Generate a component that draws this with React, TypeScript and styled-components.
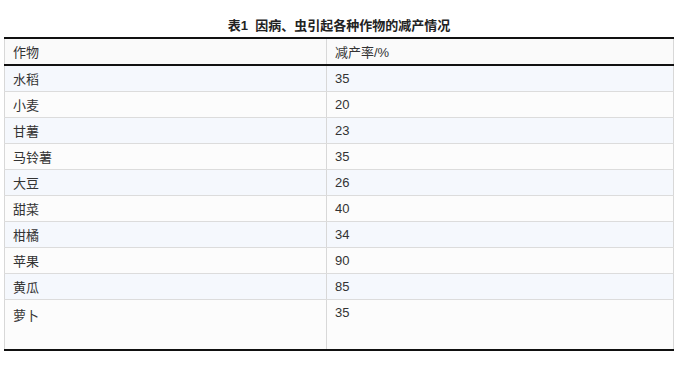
import styled, { createGlobalStyle } from 'styled-components';

const rows: [string, string][] = [
  ['水稻', '35'],
  ['小麦', '20'],
  ['甘薯', '23'],
  ['马铃薯', '35'],
  ['大豆', '26'],
  ['甜菜', '40'],
  ['柑橘', '34'],
  ['苹果', '90'],
  ['黄瓜', '85'],
  ['萝卜', '35'],
];

const GlobalStyle = createGlobalStyle`
  body {
    margin: 0;
    background: #ffffff;
    font-family: "Liberation Sans", "Noto Sans CJK SC", sans-serif;
    color: #333;
  }
`;

const Page = styled.div`
  width: 680px;
  height: 382px;
  padding: 18px 0 0 4px;
  box-sizing: border-box;
`;

const Caption = styled.div`
  width: 670px;
  text-align: center;
  font-size: 13px;
  font-weight: bold;
  color: #222;
  height: 19px;
  line-height: 16px;
  white-space: pre;
`;

const Table = styled.table`
  width: 670px;
  border-collapse: collapse;
  font-size: 13px;
  border-top: 2px solid #111;
  border-bottom: 2px solid #111;
`;

const HeadCell = styled.th`
  text-align: left;
  font-weight: normal;
  height: 25px;
  padding: 0 8px;
  background: #fafafa;
  border-left: 1px solid #d8d8d8;
  border-right: 1px solid #d8d8d8;
  border-bottom: 2px solid #111;
  color: #333;
  &:first-child {
    width: 305px;
  }
`;

const Row = styled.tr<{ $tint: boolean }>`
  background: ${p => (p.$tint ? '#f5f8fd' : '#fcfcfc')};
`;

const Cell = styled.td<{ $tall?: boolean }>`
  height: ${p => (p.$tall ? '51px' : '26px')};
  padding: ${p => (p.$tall ? '5px 8px 0' : '0 8px')};
  vertical-align: ${p => (p.$tall ? 'top' : 'middle')};
  border-left: 1px solid #d8d8d8;
  border-right: 1px solid #d8d8d8;
  border-bottom: 1px solid #dcdcdc;
  box-sizing: border-box;
`;

export default function App() {
  return (
    <Page>
      <GlobalStyle />
      <Caption>表1  因病、虫引起各种作物的减产情况</Caption>
      <Table>
        <thead>
          <tr>
            <HeadCell>作物</HeadCell>
            <HeadCell>减产率/%</HeadCell>
          </tr>
        </thead>
        <tbody>
          {rows.map(([crop, loss], i) => {
            const last = i === rows.length - 1;
            return (
              <Row key={crop} $tint={i % 2 === 0}>
                <Cell $tall={last}>{crop}</Cell>
                <Cell $tall={last}>{loss}</Cell>
              </Row>
            );
          })}
        </tbody>
      </Table>
    </Page>
  );
}
